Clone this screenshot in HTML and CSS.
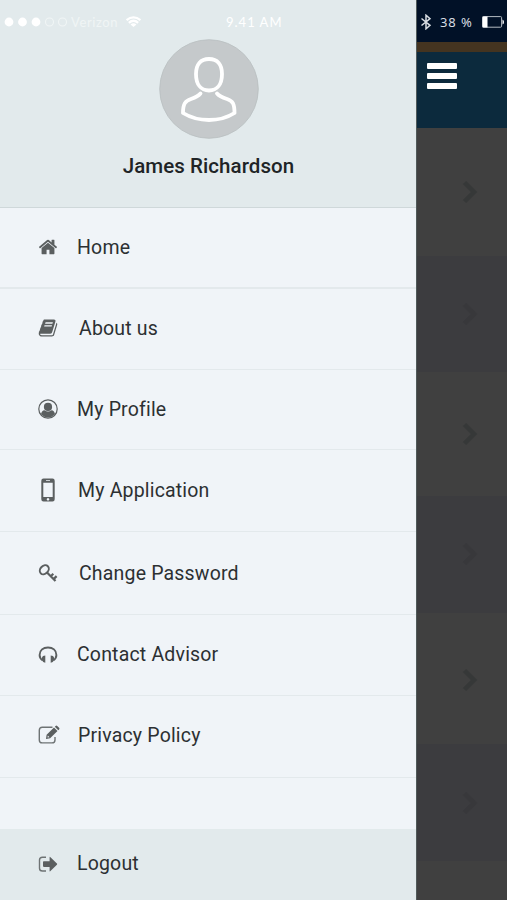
FILE: index.html
```html
<!DOCTYPE html>
<html lang="en">
<head>
<meta charset="utf-8">
<title>Menu</title>
<link rel="stylesheet" href="styles.css">
</head>
<body>
<div class="screen">
  <aside class="drawer">
    <header class="profile">
      <div class="status">
        <svg class="signal" viewBox="0 0 66 12"><g fill="#fff"><circle cx="5" cy="6" r="4.4"/><circle cx="18.5" cy="6" r="4.4"/><circle cx="32" cy="6" r="4.4"/></g><g fill="none" stroke="#f0f5f5" stroke-width="1.1"><circle cx="45.500" cy="6" r="4"/><circle cx="58.500" cy="6" r="4"/></g></svg>
        <span class="carrier">Verizon</span>
        <svg class="wifi" viewBox="0 0 18 13"><g fill="none" stroke="#fff" stroke-width="2.600"><path d="M1.500 4.500Q9-1.500 16.500 4.500"/><path d="M4 7.500Q9 3 14 7.500"/></g><path fill="#fff" d="M5.800 9.200Q9 6.500 12.200 9.200L9 12z"/></svg>
        <span class="time">9.41 AM</span>
      </div>
      <svg class="avatar" viewBox="0 0 100 100"><circle cx="50" cy="50" r="49.300" fill="#c5c9cb" stroke="#b9bfc0" stroke-width=".8"/><g fill="none" stroke="#fff" stroke-width="3.800" stroke-linecap="round" stroke-linejoin="round"><path d="M50 20C41.500 20 37 25.500 37 35C37 45.500 42 51.500 50 51.500C58 51.500 63 45.500 63 35C63 25.500 58.500 20 50 20Z"/><path d="M41.500 54.500Q39 57.500 32 60C26 62 24 65 24 74Q35.500 81 50 81Q64.500 81 75.500 74C75.500 65 74 62 68 60Q60.500 57.500 58 54.500"/></g></svg>
      <h1 class="name">James Richardson</h1>
    </header>
    <nav class="menu">
      <a class="item home"><svg class="icon" viewBox="0 0 1792 1792"><path d="M1472 992v480q0 26-19 45t-45 19h-384v-384h-256v384h-384q-26 0-45-19t-19-45v-480q0-1 .5-3t.5-3l575-474 575 474q1 2 1 6zm223-69l-62 74q-8 9-21 11h-3q-13 0-21-7l-692-577-692 577q-12 8-24 7-13-2-21-11l-62-74q-8-10-7-23.500t11-21.500l719-599q32-26 76-26t76 26l244 204v-195q0-14 9-23t23-9h192q14 0 23 9t9 23v408l219 182q10 8 11 21.500t-7 23.500z"/></svg><span>Home</span></a>
      <a class="item about"><svg class="icon" viewBox="0 0 1792 1792"><path d="M1703 478q40 57 18 129l-275 906q-19 64-76.5 107.5t-122.5 43.5h-923q-77 0-148.5-53.5t-99.5-131.5q-24-67-2-127 0-4 3-27t4-37q1-8-3-21.5t-3-19.5q2-11 8-21t16.5-23.5 16.5-23.5q23-38 45-91.5t30-91.5q3-10 .5-30t-.5-28q3-11 17-28t17-23q21-36 42-92t25-90q1-9-2.5-32t.5-28q4-13 22-30.5t22-22.5q19-26 42.5-84.5t27.5-96.5q1-8-3-25.5t-2-26.5q2-8 9-18t18-23 17-21q8-12 16.5-30.5t15-35 16-36 19.5-32 26.5-23.5 36-11.5 47.5 5.500l-1 3q38-9 51-9h761q74 0 114 56t18 130l-274 906q-36 119-71.5 153.500t-128.500 34.500h-869q-27 0-38 15-11 16-1 43 24 70 144 70h923q29 0 56-15.500t35-41.500l300-987q7-22 5-57 38 15 59 43zm-1064 2q-4 13 2 22.500t20 9.500h608q13 0 25.500-9.500t16.500-22.500l21-64q4-13-2-22.500t-20-9.500h-608q-13 0-25.500 9.500t-16.500 22.500zm-83 256q-4 13 2 22.500t20 9.500h608q13 0 25.500-9.500t16.500-22.500l21-64q4-13-2-22.500t-20-9.500h-608q-13 0-25.500 9.500t-16.500 22.500z"/></svg><span>About us</span></a>
      <a class="item my-profile"><svg class="icon" viewBox="0 0 20 20"><circle cx="10" cy="10" r="9.200" fill="none" stroke="#5b5f60" stroke-width="1.200"/><circle cx="10" cy="7.900" r="4.100"/><path d="M3 15.300Q3.500 11.500 6.500 11.200Q10 14 13.500 11.200Q16.500 11.500 17 15.300Q14 18.500 10 18.500Q6 18.500 3 15.300Z"/></svg><span>My Profile</span></a>
      <a class="item application"><svg class="icon phone" viewBox="0 0 14 24"><path fill-rule="evenodd" d="M2.500 .5h9Q13.700.5 13.700 2.700v18.600q0 2.200-2.200 2.200h-9Q.3 23.500.3 21.300V2.700Q.3.500 2.500.5ZM2.300 4.800v14.200h9.400V4.800ZM5 2.200v.8h4v-.8ZM7 20a1.300 1.300 0 1 0 .01 0Z"/></svg><span>My Application</span></a>
      <a class="item password"><svg class="icon" viewBox="0 0 20 20"><g fill="none" stroke="#5b5f60"><ellipse cx="6.300" cy="6.800" rx="5" ry="3.900" transform="rotate(-45 6.300 6.800)" stroke-width="2"/><path d="M9 9.500L17.500 18M12.800 13.300L15.300 10.800M15.600 16.100L18.600 13.100" stroke-width="2.200"/></g></svg><span>Change Password</span></a>
      <a class="item contact"><svg class="icon" viewBox="0 0 20 20"><path d="M4.800 16.500Q1.600 14.500 1.600 11C1.600 6.200 5.200 3.500 10 3.500S18.400 6.200 18.400 11Q18.400 14.500 15.200 16.500" fill="none" stroke="#5b5f60" stroke-width="1.900"/><path d="M4 13.500Q4.300 11.700 7.300 11.500v7.300Q4.300 18 4 15.500ZM16 13.500Q15.700 11.700 12.700 11.500v7.300Q15.700 18 16 15.500Z"/></svg><span>Contact Advisor</span></a>
      <a class="item privacy"><svg class="icon edit" viewBox="0 0 22 20"><path d="M14.500 2.200H4.300Q1.300 2.200 1.300 5.200v9.700q0 3 3 3h9.700q3 0 3-3V12" fill="none" stroke="#6e7374" stroke-width="1.400"/><path fill-rule="evenodd" d="M8 14l.6-4.200 7.400-7.300 3.500 3.500-7.400 7.300ZM9.800 10.500l-.3 2 2-.3-1.700-1.700ZM16.800 1.700l.8-.8q.8-.8 1.600 0l1.900 1.900q.8.800 0 1.600l-.8.800Z"/></svg><span>Privacy Policy</span></a>
    </nav>
    <a class="logout"><svg class="icon" viewBox="0 0 20 20"><path d="M8 3.200H4.500Q1.500 3.200 1.500 6v8.200q0 2.800 3 2.800H8" fill="none" stroke="#6e7374" stroke-width="1.400"/><path d="M5.800 7.300h5.800V3.200Q11.600 2.500 12.200 3l6.700 6.600q.6.500 0 1.100l-6.700 6.500q-.6.500-.6-.3v-4H5.800q-.8 0-.8-.8V8.100q0-.8.800-.8Z"/></svg><span>Logout</span></a>
  </aside>
  <main class="page">
    <div class="page-status">
      <svg class="bluetooth" viewBox="0 0 12 16"><path d="M1.500 4.500L10 11.300L6 14.800V1.200L10 4.700L1.500 11.500" fill="none" stroke="#d8dde2" stroke-width="1.500"/></svg>
      <span class="percent">38 %</span>
      <svg class="battery" viewBox="0 0 22 12"><rect x=".6" y=".6" width="19" height="10.600" rx="1" fill="none" stroke="#b4bcc3" stroke-width="1"/><path d="M.5.5h5v11H.5zM20.500 3.500q1.500.5 1.500 2.500t-1.500 2.500z" fill="#fff"/></svg>
    </div>
    <div class="accent"></div>
    <div class="navbar"><span class="burger"><i></i><i></i><i></i></span></div>
    <div class="row r1"><svg class="chevron" viewBox="0 0 16 24"><path d="M2.500 2.500L12 12L2.500 21.500"/></svg></div>
    <div class="row alt r2"><svg class="chevron" viewBox="0 0 16 24"><path d="M2.500 2.500L12 12L2.500 21.500"/></svg></div>
    <div class="row r3"><svg class="chevron" viewBox="0 0 16 24"><path d="M2.500 2.500L12 12L2.500 21.500"/></svg></div>
    <div class="row alt r4"><svg class="chevron" viewBox="0 0 16 24"><path d="M2.500 2.500L12 12L2.500 21.500"/></svg></div>
    <div class="row r5"><svg class="chevron" viewBox="0 0 16 24"><path d="M2.500 2.500L12 12L2.500 21.500"/></svg></div>
    <div class="row alt r6"><svg class="chevron" viewBox="0 0 16 24"><path d="M2.500 2.500L12 12L2.500 21.500"/></svg></div>
    <div class="row last"></div>
  </main>
</div>
</body>
</html>
```
FILE: styles.css
```css
* { box-sizing: border-box; }
body { margin: 0; font-family: Roboto, "Liberation Sans", sans-serif; }
.screen { display: flex; width: 507px; height: 900px; overflow: hidden; }
.drawer { width: 416px; display: flex; flex-direction: column; background: #f0f4f8; }
.profile { height: 208px; padding-left: 1px; background: #e2eaec; border-bottom: 1.500px solid #cfd8da; display: flex; flex-direction: column; align-items: center; }
.status { width: 100%; height: 39px; padding: 4px 0 0 3px; display: flex; align-items: center; color: #fff; font: 13px Lato, sans-serif; }
.signal { width: 66px; height: 12px; }
.carrier { width: 50px; margin-left: 1px; color: #f0f5f5; letter-spacing: .6px; }
.wifi { width: 17px; height: 12px; margin-left: 4px; }
.time { margin-left: 84px; letter-spacing: 1px; white-space: nowrap; }
.avatar { width: 100px; height: 100px; flex: none; }
.name { margin: 14px 0 0; font-size: 20.500px; line-height: 27px; font-weight: 500; color: #202426; letter-spacing: .06px; }
.menu { height: 621px; }
.item, .logout { display: flex; align-items: center; padding-left: 38px; font-size: 19.500px; line-height: 24px; letter-spacing: .18px; color: #2c3032; }
.item span, .logout span { padding-top: 2px; }
.item { border-bottom: 1px solid #e3e9ec; }
.icon { width: 20px; height: 20px; margin-right: 19px; fill: #5b5f60; flex: none; }
.phone { width: 14px; height: 24px; margin: 0 23px 0 3px; }
.edit { width: 22px; margin-right: 18px; }
.home { height: 81px; padding-bottom: 1px; border-bottom-width: 2px; }
.about { height: 81px; padding-bottom: 2px; }
.about .icon, .password .icon { margin-right: 21px; }
.my-profile { height: 80px; padding-bottom: 1px; }
.application { height: 82px; padding-bottom: 2px; }
.password { height: 83px; padding-bottom: 1px; }
.contact { height: 81px; padding-bottom: 2px; }
.privacy { height: 82px; padding-bottom: 4px; }
.logout { height: 71px; padding-bottom: 4px; background: #e2eaec; }
.logout .icon { margin-top: 2px; }
.page { width: 91px; border-left: 1px solid #505a5a; background: #404040; }
.page-status { height: 42px; padding: 2px 0 0 3px; display: flex; align-items: center; background: #011127; color: #d8dde2; }
.bluetooth { width: 12px; height: 16px; }
.percent { width: 36px; margin-left: 8px; font: 13px "Noto Sans", sans-serif; letter-spacing: .9px; white-space: nowrap; }
.battery { width: 22px; height: 12px; margin-left: 6px; }
.accent { height: 10px; background: #443420; }
.navbar { height: 76px; padding: 11px 0 0 10px; background: #0c2a3d; }
.burger { display: flex; flex-direction: column; gap: 4.500px; width: 30px; }
.burger i { height: 5.500px; border-radius: 1px; background: #fff; }
.row { padding-left: 45px; background: #404040; }
.alt { background: #3c3c3f; }
.r1 { height: 128px; padding-top: 52px; }
.r2 { height: 116px; padding-top: 46px; }
.r3 { height: 124px; padding-top: 50px; }
.r4 { height: 117px; padding-top: 46px; }
.r5 { height: 131px; padding-top: 55px; }
.r6 { height: 117px; padding-top: 47px; }
.last { height: 39px; }
.chevron { display: block; width: 16px; height: 24px; fill: none; stroke: #363838; stroke-width: 4.500; }
.alt .chevron { stroke: #38383b; }
```
